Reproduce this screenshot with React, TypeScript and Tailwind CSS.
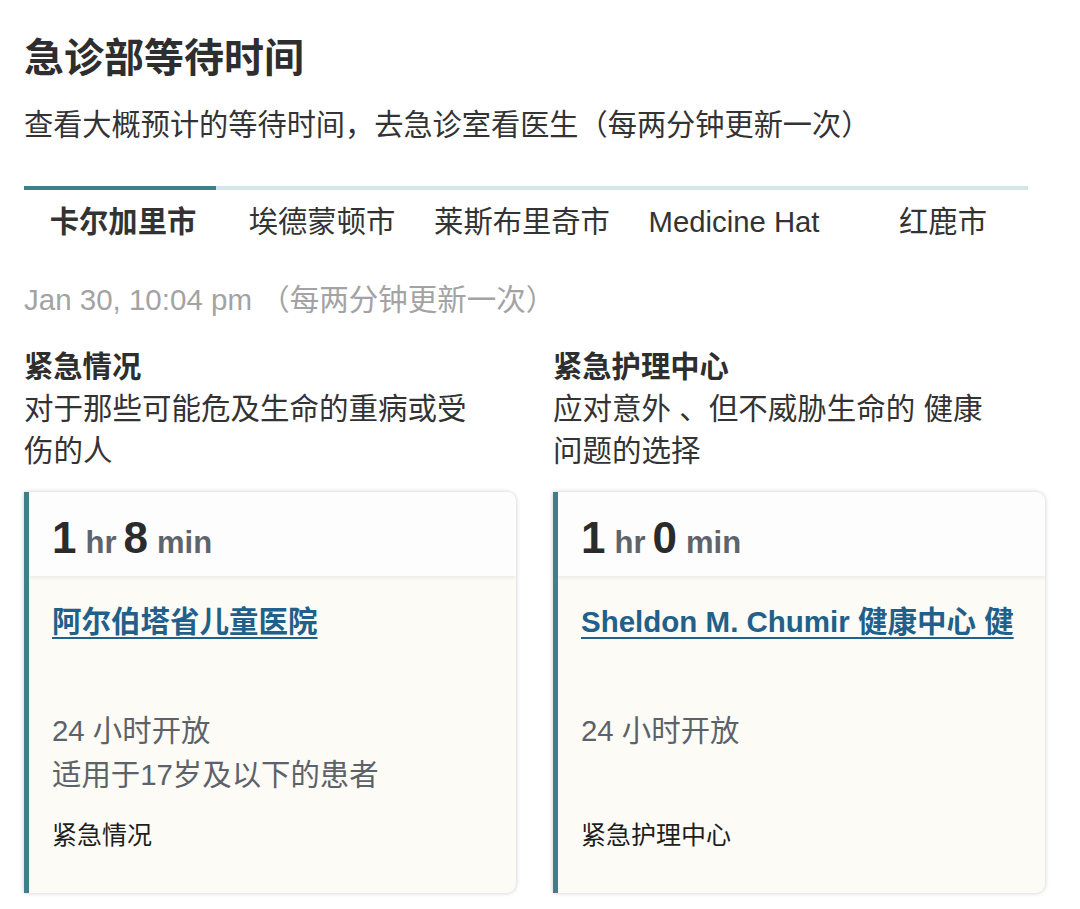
import React from "react";

const font = { fontFamily: '"Liberation Sans", "Noto Sans CJK SC", sans-serif' };

const tabs = [
  { label: "卡尔加里市", w: "w-[192px] pl-[6px]", active: true },
  { label: "埃德蒙顿市", w: "w-[212px]", active: false },
  { label: "莱斯布里奇市", w: "w-[188px]", active: false },
  { label: "Medicine Hat", w: "w-[236px]", active: false },
  { label: "红鹿市", w: "w-[176px] pl-[6px]", active: false },
];

type Card = {
  hr: string;
  min: string;
  name: string;
  hours: string[];
  kind: string;
};

const columns: { title: string; desc: string[]; card: Card }[] = [
  {
    title: "紧急情况",
    desc: ["对于那些可能危及生命的重病或受", "伤的人"],
    card: {
      hr: "1",
      min: "8",
      name: "阿尔伯塔省儿童医院",
      hours: ["24 小时开放", "适用于17岁及以下的患者"],
      kind: "紧急情况",
    },
  },
  {
    title: "紧急护理中心",
    desc: ["应对意外 、但不威胁生命的 健康", "问题的选择"],
    card: {
      hr: "1",
      min: "0",
      name: "Sheldon M. Chumir 健康中心 健",
      hours: ["24 小时开放"],
      kind: "紧急护理中心",
    },
  },
];

function WaitCard({ card }: { card: Card }) {
  return (
    <div className="rounded-r-[9px] border-l-[5px] border-[#3e7f8a] bg-[#fdfbf5] shadow-[0_0_4px_rgba(0,0,0,0.22)] overflow-hidden">
      {/* 等待时间 */}
      <div className="relative z-10 h-[84px] bg-[#fdfdfd] pl-[23px] pt-[22px] shadow-[0_2px_4px_rgba(0,0,0,0.07)]">
        <div className="flex items-baseline leading-[48px] font-bold">
          <span className="text-[44px] text-[#2b2b2b]">{card.hr}</span>
          <span className="ml-[9px] text-[31px] text-[#5e646c]">hr</span>
          <span className="ml-[7px] text-[44px] text-[#2b2b2b]">{card.min}</span>
          <span className="ml-[9px] text-[31px] text-[#5e646c]">min</span>
        </div>
      </div>

      <div className="px-[23px] pt-[28px] pb-[40px]">
        <a
          href="#"
          className="block whitespace-nowrap text-[29.5px] font-bold leading-[36px] text-[#21608a] underline decoration-2 underline-offset-[5px]"
        >
          {card.name}
        </a>
        <div className="mt-[69px] h-[88px] text-[29.4px] leading-[44px] text-[#5c6269]">
          {card.hours.map((h) => (
            <p key={h}>{h}</p>
          ))}
        </div>
        <p className="mt-[20px] text-[25px] leading-[36px] text-[#1e1e1e]">{card.kind}</p>
      </div>
    </div>
  );
}

export default function App() {
  return (
    <div style={font} className="min-h-[909px] w-[1080px] bg-white px-[24px] pt-[34px] text-[#333]">
      <h1 className="text-[40px] font-bold leading-[48px] text-[#2e2e2e]">急诊部等待时间</h1>
      <p className="mt-[23px] text-[29.2px] leading-[40px] text-[#333]">
        查看大概预计的等待时间，去急诊室看医生（每两分钟更新一次）
      </p>

      {/* 城市标签 */}
      <div className="mt-[41px] flex w-[1004px]">
        {tabs.map((t) => (
          <div
            key={t.label}
            className={`${t.w} border-t-[4px] pt-[12px] pb-[12px] text-center text-[29.3px] leading-[40px] text-[#333] ${
              t.active ? "border-[#3e7f8a] font-bold" : "border-[#d4e6e7]"
            }`}
          >
            {t.label}
          </div>
        ))}
      </div>

      <p className="mt-[28px] text-[29.5px] leading-[36px] text-[#a3a3a3]">
        Jan 30, 10:04 pm （每两分钟更新一次）
      </p>

      <div className="mt-[28px] grid grid-cols-2 gap-x-[37px] w-[1021px]">
        {columns.map((c) => (
          <div key={c.title}>
            <h2 className="text-[29.3px] font-bold leading-[42px] text-[#2e2e2e]">{c.title}</h2>
            <div className="text-[29.5px] leading-[42px] text-[#333]">
              {c.desc.map((d) => (
                <p key={d}>{d}</p>
              ))}
            </div>
            <div className="mt-[20px]">
              <WaitCard card={c.card} />
            </div>
          </div>
        ))}
      </div>
    </div>
  );
}
